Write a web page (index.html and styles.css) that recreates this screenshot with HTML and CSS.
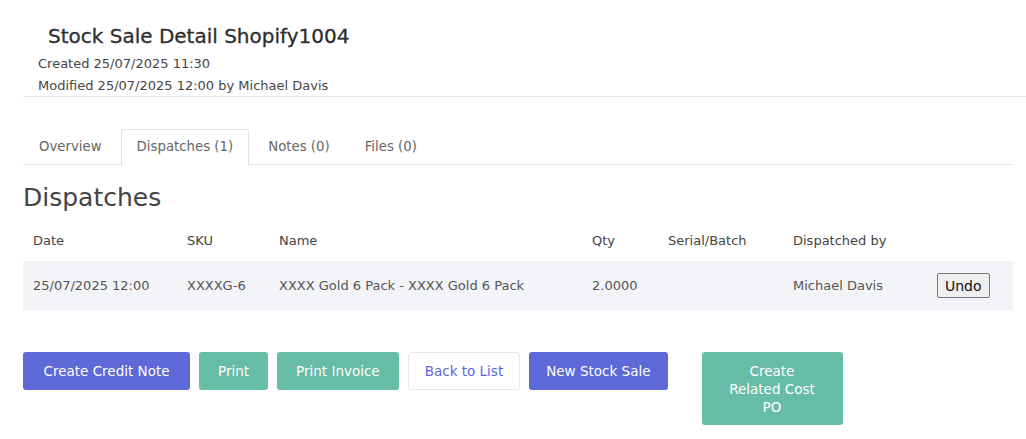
FILE: index.html
```html
<!DOCTYPE html>
<html>
<head>
<meta charset="utf-8">
<link rel="stylesheet" href="styles.css">
</head>
<body>
<div class="page">
  <header class="head">
    <h1 class="title">Stock Sale Detail Shopify1004</h1>
    <div class="meta">Created 25/07/2025 11:30</div>
    <div class="meta">Modified 25/07/2025 12:00 by Michael Davis</div>
  </header>
  <div class="content">
    <nav class="tabs">
      <a class="tab">Overview</a>
      <a class="tab active">Dispatches (1)</a>
      <a class="tab">Notes (0)</a>
      <a class="tab">Files (0)</a>
    </nav>
    <h2 class="section">Dispatches</h2>
    <table class="grid">
      <thead>
        <tr>
          <th class="c-date">Date</th>
          <th class="c-sku">SKU</th>
          <th class="c-name">Name</th>
          <th class="c-qty">Qty</th>
          <th class="c-serial">Serial/Batch</th>
          <th class="c-by">Dispatched by</th>
          <th class="c-act"></th>
        </tr>
      </thead>
      <tbody>
        <tr>
          <td>25/07/2025 12:00</td>
          <td>XXXXG-6</td>
          <td>XXXX Gold 6 Pack - XXXX Gold 6 Pack</td>
          <td>2.0000</td>
          <td></td>
          <td>Michael Davis</td>
          <td><button class="undo">Undo</button></td>
        </tr>
      </tbody>
    </table>
    <div class="actions">
      <button class="btn blue wide">Create Credit Note</button>
      <button class="btn green">Print</button>
      <button class="btn green">Print Invoice</button>
      <button class="btn outline narrow">Back to List</button>
      <button class="btn blue narrow">New Stock Sale</button>
      <button class="btn green wrap">Create Related Cost PO</button>
    </div>
  </div>
</div>
</body>
</html>
```
FILE: styles.css
```css
* { box-sizing: border-box; }
html, body { margin: 0; padding: 0; background: #fff; }
body {
  font-family: "DejaVu Sans", sans-serif;
  color: #4a4a55;
  font-size: 13px;
}
.head {
  padding: 21px 0 0 15px;
  border-bottom: 1px solid #e6e6ee;
  margin-left: 23px;
  height: 97px;
}
.title {
  margin: 0 0 2px 10px;
  font-size: 20px;
  font-weight: 500;
  color: #2e2e2e;
  line-height: 30px;
  -webkit-text-stroke: 0.3px #2e2e2e;
}
.meta {
  font-size: 13px;
  color: #454545;
  line-height: 22px;
}
.content {
  padding: 32px 13px 0 23px;
}
.tabs {
  display: flex;
  border-bottom: 1px solid #e5e6ec;
  height: 36px;
}
.tab {
  display: block;
  padding: 0 15px;
  margin-right: 3px;
  line-height: 34px;
  border: 1px solid transparent;
  border-bottom: none;
  color: #666;
  font-size: 13.3px;
}
.tab.active {
  border-color: #e2e3e9;
  border-radius: 3px 3px 0 0;
  background: #fff;
  height: 37px;
}
.section {
  margin: 16px 0 0;
  font-size: 25px;
  font-weight: 400;
  color: #444;
  line-height: 34px;
}
.grid {
  width: 100%;
  border-collapse: collapse;
  margin-top: 5px;
}
.grid th {
  text-align: left;
  font-weight: 500;
  font-size: 13px;
  color: #444;
  height: 41px;
  padding: 0 10px;
}
.grid td {
  background: #f3f4f8;
  height: 49px;
  padding: 0 10px;
  font-size: 13px;
  color: #555;
}
.c-date { width: 154px; }
.c-sku { width: 92px; }
.c-name { width: 313px; }
.c-qty { width: 76px; }
.c-serial { width: 125px; }
.c-by { width: 144px; }
.undo {
  font-family: inherit;
  font-size: 14px;
  color: #111;
  background: #efefef;
  border: 1px solid #767676;
  border-radius: 2px;
  padding: 0 7px;
  height: 25px;
}
.actions {
  display: flex;
  align-items: flex-start;
  gap: 9px;
  margin-top: 42px;
}
.btn {
  font-family: inherit;
  font-size: 13.5px;
  height: 38px;
  padding: 0 18px;
  border-radius: 3px;
  border: 1px solid transparent;
  color: #fff;
}
.btn.wide { padding: 0 19.5px; }
.btn.narrow { padding: 0 16px; }
.btn.blue { background: #5c69d6; }
.btn.green { background: #67bca5; }
.btn.outline { background: #fff; border-color: #e6e8f0; color: #5c69d6; }
.btn.wrap {
  width: 141px;
  height: 73px;
  margin-left: 25px;
  padding: 0 24px;
  line-height: 18px;
}
```
